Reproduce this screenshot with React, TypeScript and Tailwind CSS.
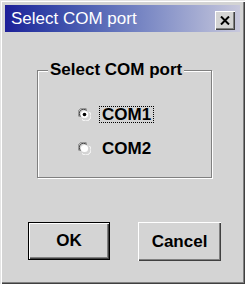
import { useState } from 'react';

function Radio({ checked }: { checked: boolean }) {
  return (
    <svg width="13" height="13" viewBox="0 0 13 13" className="shrink-0">
      <path d="M1.5 9 A5 5 0 0 1 9 1.5" fill="none" stroke="#808080" strokeWidth="1" />
      <path d="M2.5 8.5 A4 4 0 0 1 8.5 2.5" fill="none" stroke="#404040" strokeWidth="1" />
      <path d="M4 11.5 A5 5 0 0 0 11.5 4" fill="none" stroke="#ffffff" strokeWidth="1" />
      <circle cx="6.5" cy="6.5" r="3.6" fill="#ffffff" />
      {checked && <circle cx="6.5" cy="6.5" r="1.8" fill="#000000" />}
    </svg>
  );
}

export default function App() {
  const [port, setPort] = useState('COM1');

  return (
    <div
      className="w-[245px] h-[284px] bg-[#d4d4d4] px-[5px] pt-[5px] flex flex-col shadow-[inset_1px_1px_0_#e4e4e4,inset_2px_2px_0_#ffffff,inset_-1px_-1px_0_#404040,inset_-2px_-2px_0_#808080]"
      style={{ fontFamily: '"Liberation Sans", Arial, sans-serif' }}
    >
      <div className="h-[27px] shrink-0 flex items-center justify-between pl-[6px] pr-[5px] bg-gradient-to-r from-[#1e1e98] to-[#c8c8dc]">
        <span className="text-white text-[17px] leading-none">Select COM port</span>
        <button className="w-[20px] h-[19px] mt-[4px] flex items-center justify-center bg-[#d4d4d4] shadow-[inset_1px_1px_0_#ffffff,inset_-1px_-1px_0_#404040,inset_-2px_-2px_0_#808080]">
          <svg width="10" height="9" viewBox="0 0 10 9">
            <path d="M1 0.5 L9 8.5 M9 0.5 L1 8.5" stroke="#000" strokeWidth="2" fill="none" />
          </svg>
        </button>
      </div>

      <div className="relative mt-[38px] ml-[32px] w-[175px] h-[108px] border border-[#808080] shadow-[inset_1px_1px_0_#ffffff,1px_1px_0_#ffffff]">
        <span className="absolute left-[10px] -top-[11px] px-[2px] bg-[#d4d4d4] text-[17px] font-bold text-black leading-[20px]">
          Select COM port
        </span>
        <div className="flex flex-col gap-[19px] pl-[40px] pt-[36px]">
          {['COM1', 'COM2'].map((p) => (
            <label key={p} className="flex items-center gap-[9px] cursor-default" onClick={() => setPort(p)}>
              <Radio checked={port === p} />
              <span
                className={
                  'text-[17px] font-bold text-black leading-[15px] px-[2px] ' +
                  (port === p ? 'outline outline-1 outline-dotted outline-black' : '')
                }
              >
                {p}
              </span>
            </label>
          ))}
        </div>
      </div>

      <div className="flex gap-[28px] mt-[44px] ml-[23px]">
        <button className="w-[82px] h-[38px] border border-black bg-[#d4d4d4] text-[17px] font-bold text-black shadow-[inset_1px_1px_0_#ffffff,inset_-1px_-1px_0_#404040,inset_-2px_-2px_0_#808080]">
          OK
        </button>
        <button className="w-[83px] h-[39px] bg-[#d4d4d4] text-[17px] font-bold text-black shadow-[inset_1px_1px_0_#ffffff,inset_-1px_-1px_0_#404040,inset_-2px_-2px_0_#808080]">
          Cancel
        </button>
      </div>
    </div>
  );
}
